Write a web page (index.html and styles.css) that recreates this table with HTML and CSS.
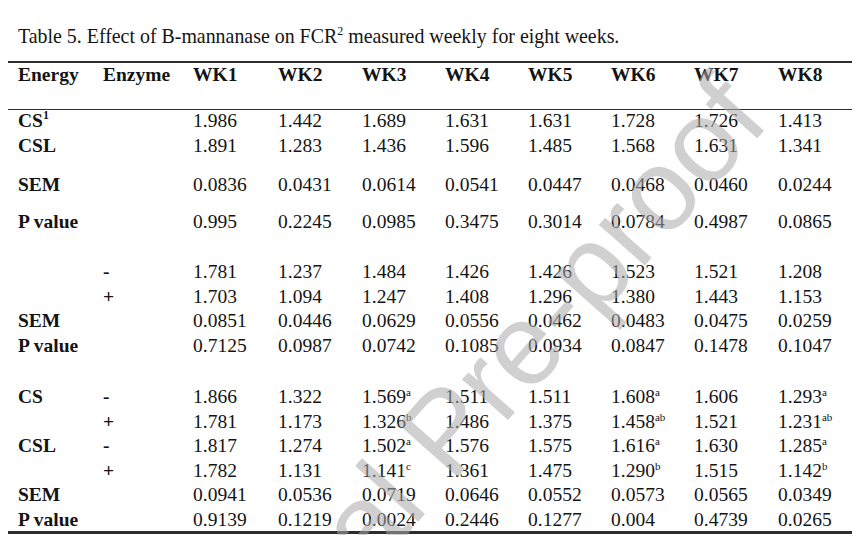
FILE: index.html
```html
<!DOCTYPE html>
<html>
<head>
<meta charset="utf-8">
<link rel="stylesheet" href="styles.css">
</head>
<body>
<div class="page">
  <p class="caption">Table 5. Effect of B-mannanase on FCR<sup>2</sup> measured weekly for eight weeks.</p>
  <div class="table">
    <div class="row head">
      <span>Energy</span><span>Enzyme</span><span>WK1</span><span>WK2</span><span>WK3</span><span>WK4</span><span>WK5</span><span>WK6</span><span>WK7</span><span>WK8</span>
    </div>

    <div class="group g1">
      <div class="row"><span class="lbl">CS<sup>1</sup></span><span></span><span>1.986</span><span>1.442</span><span>1.689</span><span>1.631</span><span>1.631</span><span>1.728</span><span>1.726</span><span>1.413</span></div>
      <div class="row"><span class="lbl">CSL</span><span></span><span>1.891</span><span>1.283</span><span>1.436</span><span>1.596</span><span>1.485</span><span>1.568</span><span>1.631</span><span>1.341</span></div>
      <div class="row sem1"><span class="lbl">SEM</span><span></span><span>0.0836</span><span>0.0431</span><span>0.0614</span><span>0.0541</span><span>0.0447</span><span>0.0468</span><span>0.0460</span><span>0.0244</span></div>
      <div class="row p1"><span class="lbl">P value</span><span></span><span>0.995</span><span>0.2245</span><span>0.0985</span><span>0.3475</span><span>0.3014</span><span>0.0784</span><span>0.4987</span><span>0.0865</span></div>
    </div>

    <div class="group g2">
      <div class="row"><span></span><span class="lbl">-</span><span>1.781</span><span>1.237</span><span>1.484</span><span>1.426</span><span>1.426</span><span>1.523</span><span>1.521</span><span>1.208</span></div>
      <div class="row"><span></span><span class="lbl">+</span><span>1.703</span><span>1.094</span><span>1.247</span><span>1.408</span><span>1.296</span><span>1.380</span><span>1.443</span><span>1.153</span></div>
      <div class="row"><span class="lbl">SEM</span><span></span><span>0.0851</span><span>0.0446</span><span>0.0629</span><span>0.0556</span><span>0.0462</span><span>0.0483</span><span>0.0475</span><span>0.0259</span></div>
      <div class="row"><span class="lbl">P value</span><span></span><span>0.7125</span><span>0.0987</span><span>0.0742</span><span>0.1085</span><span>0.0934</span><span>0.0847</span><span>0.1478</span><span>0.1047</span></div>
    </div>

    <div class="group g3">
      <div class="row"><span class="lbl">CS</span><span class="lbl">-</span><span>1.866</span><span>1.322</span><span>1.569<sup>a</sup></span><span>1.511</span><span>1.511</span><span>1.608<sup>a</sup></span><span>1.606</span><span>1.293<sup>a</sup></span></div>
      <div class="row"><span></span><span class="lbl">+</span><span>1.781</span><span>1.173</span><span>1.326<sup>b</sup></span><span>1.486</span><span>1.375</span><span>1.458<sup>ab</sup></span><span>1.521</span><span>1.231<sup>ab</sup></span></div>
      <div class="row"><span class="lbl">CSL</span><span class="lbl">-</span><span>1.817</span><span>1.274</span><span>1.502<sup>a</sup></span><span>1.576</span><span>1.575</span><span>1.616<sup>a</sup></span><span>1.630</span><span>1.285<sup>a</sup></span></div>
      <div class="row"><span></span><span class="lbl">+</span><span>1.782</span><span>1.131</span><span>1.141<sup>c</sup></span><span>1.361</span><span>1.475</span><span>1.290<sup>b</sup></span><span>1.515</span><span>1.142<sup>b</sup></span></div>
      <div class="row"><span class="lbl">SEM</span><span></span><span>0.0941</span><span>0.0536</span><span>0.0719</span><span>0.0646</span><span>0.0552</span><span>0.0573</span><span>0.0565</span><span>0.0349</span></div>
      <div class="row last"><span class="lbl">P value</span><span></span><span>0.9139</span><span>0.1219</span><span>0.0024</span><span>0.2446</span><span>0.1277</span><span>0.004</span><span>0.4739</span><span>0.0265</span></div>
    </div>
  </div>
  <div class="watermark">Journal Pre-proof</div>
</div>
</body>
</html>
```

FILE: styles.css
```css
html, body {
  margin: 0;
  padding: 0;
  background: #ffffff;
}

body {
  width: 859px;
  height: 535px;
  overflow: hidden;
  font-family: "Liberation Serif", "Times New Roman", serif;
  font-size: 19.5px;
  color: #141414;
}

.page {
  position: relative;
  width: 859px;
  height: 535px;
  overflow: hidden;
  padding-top: 23.5px;
  box-sizing: border-box;
}

.caption {
  margin: 0 0 0 18px;
  font-size: 19.9px;
  line-height: 25px;
  white-space: nowrap;
}

.caption sup {
  font-size: 12px;
  line-height: 0;
  vertical-align: 8px;
}

.table {
  margin: 12.5px 0 0 8px;
  width: 844px;
  border-top: 2px solid #2e2e2e;
  border-bottom: 3px solid #2e2e2e;
}

.row {
  display: grid;
  grid-template-columns: 85px 90px 85px 84px 83px 83px 83px 83px 84px 1fr;
  padding-left: 10px;
  line-height: 24.5px;
  height: 24.5px;
  white-space: nowrap;
}

.head {
  font-weight: bold;
  height: 46.5px;
  border-bottom: 1.5px solid #2e2e2e;
  box-sizing: border-box;
}

.lbl {
  font-weight: bold;
}

.row sup {
  font-size: 11px;
  line-height: 0;
  vertical-align: 7px;
}

.lbl sup {
  font-size: 12px;
  vertical-align: 8px;
}

.g1 {
  margin-top: -0.5px;
}

.sem1 {
  margin-top: 15px;
}

.p1 {
  margin-top: 12.5px;
}

.g2 {
  margin-top: 25.5px;
}

.g3 {
  margin-top: 27px;
}

.row.last {
  height: 23px;
}

.watermark {
  position: absolute;
  left: 445px;
  top: 431px;
  transform: translate(-50%, -50%) rotate(-48.5deg);
  font-family: "Liberation Sans", Arial, sans-serif;
  font-size: 116px;
  line-height: 1;
  white-space: nowrap;
  color: rgba(170, 170, 170, 0.55);
  pointer-events: none;
}
```
